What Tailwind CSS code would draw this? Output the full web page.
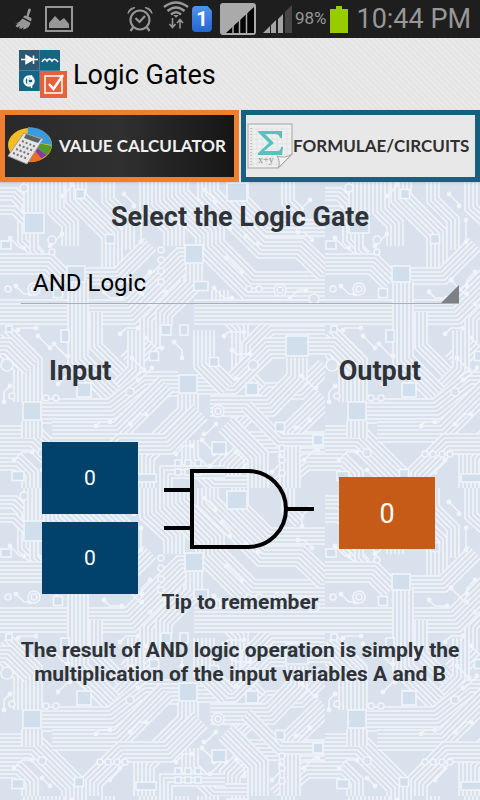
<!DOCTYPE html>
<html lang="en">
  <head>
    <meta charset="UTF-8" />
    <meta name="viewport" content="width=device-width, initial-scale=1.0" />
    <title>Logic Gates</title>
    <script src="https://cdn.jsdelivr.net/npm/@tailwindcss/browser@4"></script>
  </head>

  <body class="relative isolate flex min-h-screen flex-col bg-[#d9e1ed] font-[Roboto,sans-serif] text-[#2f3338]">
    <!-- Circuit board background -->
    <svg class="absolute inset-0 -z-10 h-full w-full" aria-hidden="true">
      <defs>
        <g id="board" fill="none"></g>
        <pattern id="tile" width="325" height="308" patternUnits="userSpaceOnUse" patternTransform="translate(0 180)">
          <use href="#board" />
        </pattern>
      </defs>
      <rect width="100%" height="100%" fill="url(#tile)" />
    </svg>

    <!-- Status bar -->
    <div class="flex h-[38px] items-center bg-[#1e1e1e] pr-[9px] pl-[15px] text-[#979797]">
      <svg class="h-[22px] w-[18px]" viewBox="0 0 18 18" preserveAspectRatio="none" fill="currentColor">
        <path d="M13 1.5 Q14.5-.5 16 1.5 L13.500 7 L16 8 Q17 9 16 11 L8 7.500 Q9.500 5.500 11.500 6.500 Z" />
        <path d="M7.500 8.500 L15.500 12 Q14.500 17 8 17.500 L8.500 15.500 L6.500 17 L4 16.500 L5 14.500 L2.500 16 L.5 15 L3 12.500 L0 13 Q5 11.500 7.500 8.500Z" />
      </svg>
      <svg class="ml-3 h-[26px] w-7" viewBox="0 0 28 26">
        <rect x="1" y="1" width="26" height="24" fill="none" stroke="currentColor" stroke-width="2" />
        <path d="M4 22 V17 L10 10 L15 15 L19 12 L24 18 V22Z" fill="currentColor" />
      </svg>
      <svg class="ml-auto h-[26px] w-[26px]" viewBox="0 0 26 26" fill="none" stroke="currentColor" stroke-width="2.2">
        <circle cx="13" cy="14" r="9.500" />
        <path d="M8.500 12 L12.500 16 L18 10 M6 21.500 L3.500 25 M20 21.500 L22.500 25" />
        <path d="M1 7.500 Q1.500 2 8 1.500 Q3.500 3.500 1 7.500Z M25 7.500 Q24.500 2 18 1.500 Q22.500 3.500 25 7.500Z" fill="currentColor" stroke-width="1" />
      </svg>
      <svg class="ml-[10px] -mt-2 h-7 w-[26px]" viewBox="0 0 26 28" fill="none" stroke="currentColor" stroke-width="2.600">
        <path d="M1 6 Q13-3 25 6 M4.500 10 Q13 3 21.500 10 M8 13.500 Q13 9 18 13.500" />
        <path d="M10.500 14 L13 17 L15.500 14Z" fill="currentColor" stroke="none" />
        <path d="M9.500 17 V26 M6.500 23 L9.500 26.500 L12.500 23 M17 27.500 V18.500 M14 22 L17 18.500 L20 22" stroke-width="1.600" />
      </svg>
      <span class="ml-[3px] flex h-[26px] w-5 items-center justify-center rounded-sm bg-linear-to-b from-[#4f93ef] to-[#2266d2] text-xl font-bold text-white [clip-path:polygon(0_0,78%_0,100%_18%,100%_100%,0_100%)]">1</span>
      <svg class="ml-2 h-8 w-9" viewBox="0 0 36 32">
        <rect width="36" height="32" rx="3" fill="#aaaaaa" />
        <path d="M6 30 L34 4 V30Z" fill="#050505" />
        <path d="M13 16 V30 M19.500 10 V30 M26.500 6 V30" stroke="#aaaaaa" stroke-width="1.500" />
      </svg>
      <svg class="ml-[7px] h-7 w-[29px]" viewBox="0 0 29 28">
        <path d="M0 28 L7 21 V28Z M8 20 L13 15 V28 H8Z M15 14 L20 9 V28 H15Z" fill="#a5a5a5" />
        <path d="M22 7 L29 0 V28 H22Z" fill="#464646" />
      </svg>
      <span class="ml-[3px] text-[17px]">98%</span>
      <svg class="ml-1 h-[27px] w-[18px]" viewBox="0 0 18 27">
        <path d="M0 3 H6 V0 H12 V3 H18 V27 H0Z" fill="#99cc00" />
      </svg>
      <span class="ml-2 text-[27px]">10:44 PM</span>
    </div>

    <!-- Action bar -->
    <header class="flex h-[72px] items-center gap-[6px] bg-[#e6e6e6] bg-[repeating-linear-gradient(45deg,#e9e9e9_0_2px,#e4e4e4_2px_4px)] pl-[19px] text-black">
      <svg class="h-12 w-12" viewBox="0 0 48 48" fill="none">
        <rect width="41" height="41" fill="#176487" />
        <rect width="20" height="20" fill="#2c5871" />
        <path d="M20.500 0 V41 M0 20.500 H41" stroke="#47809a" />
        <g stroke="#fff" stroke-width="1.500">
          <path d="M2 9.500 H19 M14.500 5.500 V14" />
          <path d="M7 5.500 L14 9.500 L7 13.500Z" fill="#fff" />
          <path d="M23 12 Q25.500 7 28 11 Q30.500 7 33 11 Q35.500 7 39 12" />
          <circle cx="10" cy="31" r="4.500" stroke-width="2.500" />
          <path d="M12.500 25 V29 H9 M9 33 H12.500 V38 M9 28 V34" />
        </g>
        <rect x="21" y="21" width="27" height="27" fill="#e6623a" />
        <path d="M26 26 H43 V43 H26Z" stroke="#fff" stroke-width="1.500" />
        <path d="M30 34 L34.500 39 L44 25" stroke="#fff" stroke-width="2.500" />
      </svg>
      <h1 class="pt-[2px] text-[27px]">Logic Gates</h1>
    </header>

    <!-- Tabs -->
    <nav class="grid grid-cols-2 gap-[2px] bg-[#e0e3e9] font-[Lato,sans-serif] text-[17px] font-bold whitespace-nowrap shadow-sm">
      <button type="button" class="flex h-[72px] items-center gap-[6px] border-5 border-[#f07e2f] bg-linear-to-r from-[#292929] via-[#303030] to-[#161616] pl-[2px] text-[#f1f1f1]">
        <svg class="h-[38px] w-[46px] shrink-0" viewBox="0 0 46 38">
          <ellipse cx="23" cy="18" rx="22" ry="17" fill="#f4bd24" />
          <path d="M20 14 L21 0 Q42 1 45 18 Z" fill="#399bdc" />
          <path d="M20 14 L45 19 Q44 24 40 28Z" fill="#4f9c29" />
          <path d="M20 14 L40 28 L34 32Z" fill="#813baa" />
          <path d="M20 14 L35 32 Q29 36 23 35Z" fill="#ee6d20" />
          <path d="M17 6 L36 12 L20 37 L1 29Z" fill="#e5e5e5" stroke="#9d9d9d" />
          <path d="M19 7 L34 12 L31 16 L17 11Z" fill="#59636a" />
          <path d="M15 14 L29 20 M12 18 L27 24 M9 22 L24 28 M6 26 L21 32" stroke="#777" stroke-width="2" stroke-dasharray="2 2" />
        </svg>
        VALUE CALCULATOR
      </button>
      <button type="button" class="flex h-[72px] items-center border-5 border-[#17617f] bg-[#e8e8e8] pl-px text-[#303030]">
        <svg class="h-[46px] w-[46px] shrink-0" viewBox="0 0 46 46">
          <path d="M1 1 H45 V31 L31 45 H1Z" fill="#efefef" stroke="#bdbdbd" stroke-width="1.500" />
          <path d="M5 4 V43 M10 4 V43 M15 4 V43 M20 4 V43 M25 4 V43 M30 4 V43 M35 4 V38 M40 4 V34 M3 6 H43 M3 11 H43 M3 16 H43 M3 21 H43 M3 26 H43 M3 31 H43 M3 36 H38 M3 41 H34" stroke="#dde1e3" stroke-width=".8" />
          <path d="M4 5 V42" stroke="#999" stroke-dasharray="1 2" />
          <path d="M11 8 H35 V15 H33 Q32 11 28 11 H18 L27 20 L17 28 H30 Q34 28 34 24 H36 L35 32 H11 V30 L22 20 L11 9Z" fill="#5ac0bb" />
          <text x="11" y="40" font-family="Liberation Serif, serif" font-size="10" font-weight="400" fill="#8b8b8b">x+y</text>
          <path d="M31 45 Q34 39 30 33 Q38 36 45 31Z" fill="#f2f2f2" stroke="#a7a7a7" />
        </svg>
        FORMULAE/CIRCUITS
      </button>
    </nav>

    <!-- Calculator -->
    <main class="flex flex-col pt-[19px]">
      <h2 class="text-center text-[27px] leading-8 font-bold"><label for="gate">Select the Logic Gate</label></h2>

      <div class="relative mx-[21px] mt-[30px] border-b border-[#a9afb8]">
        <select id="gate" class="h-10 w-full appearance-none bg-transparent pl-3 text-2xl text-black">
          <option>AND Logic</option>
          <option>OR Logic</option>
          <option>NOT Logic</option>
          <option>NAND Logic</option>
          <option>NOR Logic</option>
          <option>XOR Logic</option>
        </select>
        <svg class="pointer-events-none absolute right-0 bottom-0 h-[18px] w-[18px]" viewBox="0 0 18 18"><path d="M18 0 V18 H0Z" fill="#7d8085" /></svg>
      </div>

      <div class="mt-[51px] flex justify-between pr-[59px] pl-[49px] text-[27px] leading-8 font-bold">
        <h3>Input</h3>
        <h3>Output</h3>
      </div>

      <div class="mt-[55px] flex items-start justify-between pr-[45px] pl-[42px]">
        <div class="flex flex-col gap-2 text-[21px] text-white">
          <button type="button" aria-label="Input A" class="h-[72px] w-24 bg-[#00426c] pt-[2px]">0</button>
          <button type="button" aria-label="Input B" class="h-[72px] w-24 bg-[#00426c] pt-[2px]">0</button>
        </div>
        <svg class="mt-[27px] h-20 w-[150px]" viewBox="0 0 150 80" fill="none" stroke="#000" stroke-width="4">
          <path d="M28 2 H84 A38 38 0 0 1 84 78 H28Z M0 21 H28 M0 59 H28 M122 40 H150" />
        </svg>
        <output for="gate" class="mt-[35px] flex h-[72px] w-24 items-center justify-center bg-[#c65a17] pt-[2px] text-[27px] text-white">0</output>
      </div>

      <h4 class="mt-[-4px] text-center text-[21px] leading-6 font-bold">Tip to remember</h4>
      <p class="mx-4 mt-6 text-center text-[21px] leading-6 font-bold">
        The result of AND logic operation is simply the multiplication of the input variables A and B
      </p>
    </main>

    <script>
      const board = document.getElementById("board");
      const BASE = "#d9e1ed";
      const TRACE = "#f1f5fa";

      function add(tag, attrs) {
        const el = document.createElementNS("http://www.w3.org/2000/svg", tag);
        for (const key in attrs) el.setAttribute(key, attrs[key]);
        board.appendChild(el);
      }

      // parallel traces: light and dark strokes stacked from wide to narrow
      function bundle(d, count) {
        for (let n = count; n > 0; n -= 2) {
          const w = (n - 1) * 4 + 1.6;
          add("path", { d, stroke: TRACE, "stroke-width": w });
          if (n > 1) add("path", { d, stroke: BASE, "stroke-width": w - 3.2 });
        }
      }

      [
        ["M0 14H14L24 24V60L40 76", 4],
        ["M56 -4V30L70 44V66", 5],
        ["M128 184L150 162V140L186 104V80", 6],
        ["M136 150V190L112 214", 5],
        ["M220 110V128L240 148V190L262 212", 5],
        ["M325 146H270L250 166V184", 5],
        ["M325 186L300 211H270L236 245", 5],
        ["M230 308V286L254 262H325", 6],
        ["M0 282H18L30 294V308", 5],
        ["M325 282H306L276 308", 5],
        ["M190 260V280L214 304H260", 5],
        ["M262 100L290 128H325", 5],
        ["M0 30H14L34 50V70L46 82", 3],
        ["M34 -6V33", 6],
        ["M76 -4V18L112 54V90", 6],
        ["M108 -4V20L128 40V70", 4],
        ["M150 -4V26L174 48V66", 6],
        ["M174 -4V16L210 52V66L250 106H325", 8],
        ["M208 -4V14L262 68H300L325 92", 6],
        ["M240 -4V20L268 48H325", 5],
        ["M288 -4V22L300 34", 4],
        ["M0 84H48L66 102", 6],
        ["M86 96H118L150 64", 5],
        ["M0 132H130L182 80H194", 7],
        ["M194 84V104L164 134V146", 5],
        ["M194 132H325", 7],
        ["M78 100V180L112 214", 6],
        ["M96 132V166L122 192", 4],
        ["M0 156L28 184V222", 8],
        ["M42 231H112L146 204H178", 7],
        ["M198 204H232L268 168H286", 6],
        ["M308 166H325M0 166H8L30 188", 5],
        ["M188 214V232L144 276V308", 6],
        ["M204 150V184L228 208", 6],
        ["M297 178V198L270 226H210", 6],
        ["M0 258H34L74 298V308", 7],
        ["M52 252H118L166 204", 6],
        ["M92 308V294L122 264H168L200 232", 6],
        ["M258 308V276L226 244", 6],
        ["M325 218L290 252V308", 6],
        ["M246 226L280 260H325", 4],
        ["M166 308V292H225", 4],
        ["M32 241V258", 6]
      ].forEach(([d, count]) => bundle(d, count));

      // single traces ending in a round pad
      [
        [10, 58, 14, 10], [62, 16, 10, -12], [62, 54, -12, 12], [124, 14, 10, 12], [141, 40, 0, 22],
        [205, 10, 10, 12], [222, 34, 8, 14], [246, 56, 12, 8], [310, 20, -8, 18], [312, 60, -14, -8],
        [16, 106, 14, 8], [104, 112, 18, 6], [126, 100, 16, 14], [150, 92, -8, 14], [242, 92, -16, -14],
        [214, 108, 18, 10], [290, 118, 16, -8], [18, 150, 18, -2], [38, 156, 12, 12], [54, 164, 14, 12],
        [120, 154, 18, -6], [146, 158, 16, 10], [174, 162, 8, 16], [132, 178, 12, 12], [152, 188, -14, 12],
        [224, 156, 20, -4], [232, 170, 18, 4], [250, 188, -14, 10], [302, 196, 14, 12], [10, 206, -6, 16],
        [58, 204, 12, -10], [96, 246, 14, -4], [14, 280, 18, -8], [42, 290, 8, 8], [110, 292, 10, -12],
        [176, 274, 16, -8], [202, 260, 12, 14], [210, 286, 16, -12], [236, 272, 8, 16], [272, 292, 8, -16],
        [304, 280, 14, -10], [310, 240, -14, 8], [216, 244, -12, 10], [130, 244, 16, -10], [150, 124, 16, -12]
      ].forEach(([x, y, dx, dy]) => {
        const bend = Math.min(Math.abs(dx), Math.abs(dy));
        const sx = Math.sign(dx) * bend;
        const sy = Math.sign(dy) * bend;
        add("path", { d: `M${x} ${y}l${sx} ${sy}L${x + dx} ${y + dy}`, stroke: TRACE, "stroke-width": 1.6 });
        add("circle", { cx: x, cy: y, r: 2.4, fill: TRACE });
        add("circle", { cx: x + dx, cy: y + dy, r: 2.4, fill: TRACE });
      });

      // vias
      [
        [24, 8, 4], [52, 60, 4], [52, 72, 3], [8, 109, 3], [161, 70, 3], [161, 80, 3], [161, 91, 3],
        [161, 102, 3], [249, 109, 3], [259, 109, 3], [280, 110, 6], [280, 110, 3], [34, 109, 6], [34, 109, 3],
        [46, 218, 3], [56, 218, 3], [130, 212, 4], [218, 231, 6], [218, 231, 3], [7, 185, 6], [12, 216, 3],
        [100, 274, 3], [108, 274, 3], [117, 274, 3], [125, 274, 3], [253, 185, 5], [42, 273, 4], [282, 293, 3],
        [282, 280, 3], [282, 268, 3], [314, 119, 5]
      ].forEach(([cx, cy, r]) => add("circle", { cx, cy, r, fill: BASE, stroke: TRACE, "stroke-width": 1.6 }));

      // chips: centre, width, height
      [
        [34, 43, 20, 20], [194, 74, 18, 18], [76, 94, 18, 16], [188, 204, 18, 18], [84, 210, 14, 14],
        [32, 231, 18, 18], [297, 166, 22, 20], [252, 209, 12, 12], [219, 268, 14, 12], [237, 12, 20, 18],
        [280, 247, 9, 9], [318, 260, 10, 10], [110, 59, 9, 9], [80, 14, 9, 9], [6, 65, 10, 8], [79, 294, 9, 9],
        [18, 296, 12, 9], [184, 150, 8, 10], [166, 150, 10, 10], [154, 176, 9, 9], [214, 182, 9, 9],
        [65, 156, 8, 12], [58, 113, 9, 9], [201, 106, 14, 9], [9, 149, 6, 6], [178, 283, 6, 6], [188, 283, 6, 6],
        [198, 283, 6, 6], [178, 292, 6, 6], [188, 292, 6, 6], [198, 292, 6, 6], [146, 298, 20, 8]
      ].forEach(([x, y, width, height]) =>
        add("rect", { x: x - width / 2, y: y - height / 2, width, height, fill: "#d1dfec", stroke: TRACE, "stroke-width": 1.6 })
      );
    </script>
  </body>
</html>
